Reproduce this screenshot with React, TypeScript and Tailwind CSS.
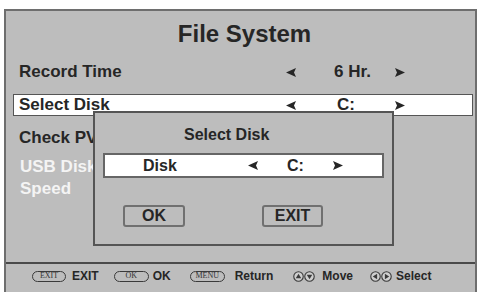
import React from 'react';

function Arrow({ dir, className = '' }: { dir: 'left' | 'right'; className?: string }) {
  const d = dir === 'left' ? 'M0 4.5 L10 0 L8 4.5 L10 9 Z' : 'M10 4.5 L0 0 L2 4.5 L0 9 Z';
  return (
    <svg width="10" height="9" viewBox="0 0 10 9" className={`shrink-0 ${className}`}>
      <path d={d} fill="#262626" />
    </svg>
  );
}

function Pill({ label, w }: { label: string; w: string }) {
  return (
    <span
      className={`flex h-[11px] ${w} shrink-0 items-center justify-center rounded-full border border-[#3a3a3a] font-['Liberation_Serif',serif] text-[8px] font-normal leading-none text-[#333]`}
    >
      {label}
    </span>
  );
}

function RoundKey({ tri }: { tri: 'up' | 'down' | 'left' | 'right' }) {
  const pts = {
    up: '5,2.5 7.5,6.5 2.5,6.5',
    down: '5,7.5 7.5,3.5 2.5,3.5',
    left: '2.5,5 6.5,2.5 6.5,7.5',
    right: '7.5,5 3.5,2.5 3.5,7.5',
  }[tri];
  return (
    <svg width="11" height="11" viewBox="0 0 10 10" className="shrink-0">
      <circle cx="5" cy="5" r="4.3" fill="#cfcfcf" stroke="#3a3a3a" strokeWidth="1" />
      <polygon points={pts} fill="#3a3a3a" />
    </svg>
  );
}

export default function App() {
  return (
    <div className="h-[292px] w-[481px] overflow-hidden bg-white pl-[4px] pt-[9px] font-['Liberation_Sans',Arial,sans-serif] font-bold text-[#262626]">
      <div className="relative flex h-[283px] w-[473px] flex-col border-2 border-b-0 border-[#6e6e6e] bg-[#bdbdbd]">
        <div className="h-[251px]">
          <div className="pl-[8px] pt-[9px] text-center text-[24px] leading-[28px]">File System</div>

          <div className="mt-[13px] flex h-[22px] items-center pl-[13px] text-[17px]">
            <span className="w-[267px]">Record Time</span>
            <Arrow dir="left" />
            <span className="w-[99px] pl-[38px]">6 Hr.</span>
            <Arrow dir="right" />
          </div>

          <div className="ml-[7px] mr-[2px] mt-[11px] flex h-[22px] items-center border border-[#555] bg-white pl-[5px] text-[17px]">
            <span className="w-[267px]">Select Disk</span>
            <Arrow dir="left" />
            <span className="w-[99px] pl-[41px]">C:</span>
            <Arrow dir="right" />
          </div>

          <div className="mt-[11px] flex h-[22px] items-center pl-[13px] text-[17px]">Check PV</div>
          <div className="mt-[7px] flex h-[22px] items-center pl-[14px] text-[17px] text-[#f4f4f4]">USB Disk</div>
          <div className="flex h-[22px] items-center pl-[14px] text-[17px] text-[#f4f4f4]">Speed</div>
        </div>

        <div className="h-[2px] bg-[#4a4a4a]" />

        <div className="flex flex-1 items-center pb-[4px] pl-[26px] text-[12px]">
          <Pill label="EXIT" w="w-[34px]" />
          <span className="ml-[6px]">EXIT</span>
          <span className="ml-[15px]"><Pill label="OK" w="w-[35px]" /></span>
          <span className="ml-[4px]">OK</span>
          <span className="ml-[19px]"><Pill label="MENU" w="w-[35px]" /></span>
          <span className="ml-[10px]">Return</span>
          <span className="ml-[20px] flex">
            <RoundKey tri="up" />
            <RoundKey tri="down" />
          </span>
          <span className="ml-[7px]">Move</span>
          <span className="ml-[17px] flex">
            <RoundKey tri="left" />
            <RoundKey tri="right" />
          </span>
          <span className="ml-[4px]">Select</span>
        </div>

        <div className="absolute left-[87px] top-[100px] h-[135px] w-[301px] border-2 border-[#555] bg-[#bdbdbd]">
          <div className="mt-[12px] pl-[89px] text-[16px] leading-[20px]">Select Disk</div>
          <div className="ml-[8px] mt-[8px] flex h-[25px] w-[281px] items-center border-2 border-[#666] bg-white pl-[38px] text-[16px]">
            <span className="w-[105px]">Disk</span>
            <Arrow dir="left" />
            <span className="ml-[29px] w-[46px]">C:</span>
            <Arrow dir="right" />
          </div>
          <div className="ml-[28px] mt-[27px] flex text-[16px]">
            <div className="flex h-[22px] w-[62px] items-center justify-center rounded-[3px] border-2 border-[#707070]">OK</div>
            <div className="ml-[77px] flex h-[22px] w-[61px] items-center justify-center rounded-[3px] border-2 border-[#707070]">EXIT</div>
          </div>
        </div>
      </div>
    </div>
  );
}
